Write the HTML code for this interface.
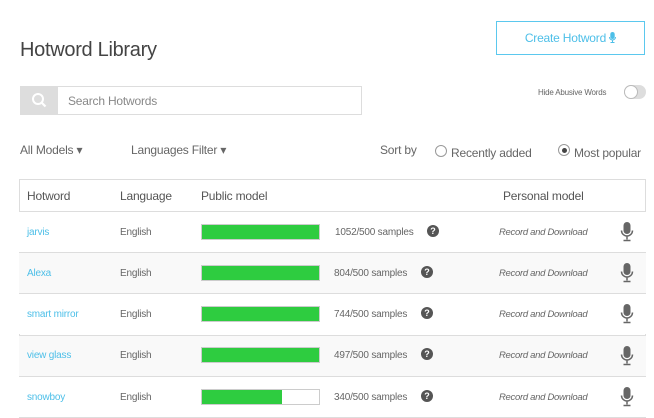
<!DOCTYPE html>
<html><head><style>
*{margin:0;padding:0;box-sizing:border-box}
body{width:654px;height:418px;overflow:hidden;background:#fff;font-family:"Liberation Sans",sans-serif;color:#555;position:relative}
.a{position:absolute;white-space:nowrap}
.row{position:absolute;left:19px;width:627px;height:41px;border-top:1px solid #ddd}
.bar{position:absolute;left:201px;width:119px;height:16px;border:1px solid #ccc;background:#fff}
.bar i{display:block;height:100%;background:#2ecc40}
.q{position:absolute;width:12px;height:12px;border-radius:50%;background:#555;color:#fff;font-size:9px;font-weight:bold;text-align:center;line-height:12px}
.t{font-size:10px;letter-spacing:-0.2px}
</style></head><body>
<div class="a" style="left:20px;top:39px;font-size:20px;color:#444;letter-spacing:-0.3px">Hotword Library</div>
<div class="a" style="left:496px;top:21px;width:149px;height:34px;border:1px solid #5bc8ee;color:#4dbfe8;font-size:12px;text-align:center;line-height:32px;letter-spacing:-0.2px">Create Hotword <svg width="7" height="11" viewBox="0 0 7 11" style="vertical-align:-1px"><rect x="1.3" y="0" width="4.4" height="7" rx="2.2" fill="#4dbfe8"/><path d="M0.5 5a3 3 0 0 0 6 0M3.5 8v2M1.5 10.5h4" stroke="#4dbfe8" fill="none"/></svg></div>
<div class="a" style="left:20px;top:86px;width:342px;height:29px;border:1px solid #ddd"></div>
<div class="a" style="left:20px;top:86px;width:38px;height:29px;background:#ddd"><svg width="38" height="29"><circle cx="18" cy="13" r="5" stroke="#fff" stroke-width="2" fill="none"/><path d="M21.5 16.5l4 4" stroke="#fff" stroke-width="2.2"/></svg></div>
<div class="a" style="left:68px;top:94px;font-size:12px;color:#888;letter-spacing:-0.2px">Search Hotwords</div>
<div class="a" style="left:538px;top:88px;font-size:8px;color:#666;letter-spacing:-0.2px">Hide Abusive Words</div>
<div class="a" style="left:624px;top:85px;width:22px;height:14px;border-radius:7px;background:#ddd"><div style="position:absolute;left:0;top:0;width:14px;height:14px;border-radius:50%;background:#fff;border:1px solid #bbb"></div></div>
<div class="a" style="left:20px;top:143px;font-size:12px;color:#666;letter-spacing:-0.2px">All Models ▾</div>
<div class="a" style="left:131px;top:143px;font-size:12px;color:#666;letter-spacing:-0.2px">Languages Filter ▾</div>
<div class="a" style="left:380px;top:143px;font-size:12px;color:#666;letter-spacing:-0.2px">Sort by</div>
<div class="a" style="left:435px;top:145px;width:12px;height:12px;border:1px solid #999;border-radius:50%"></div>
<div class="a" style="left:451px;top:146px;font-size:12px;color:#666;letter-spacing:-0.2px">Recently added</div>
<div class="a" style="left:558px;top:144px;width:12px;height:12px;border:1px solid #999;border-radius:50%"><div style="margin:2.5px;width:5px;height:5px;border-radius:50%;background:#444"></div></div>
<div class="a" style="left:574px;top:146px;font-size:12px;color:#666;letter-spacing:-0.2px">Most popular</div>
<div class="a" style="left:19px;top:179px;width:627px;height:239px;border:1px solid #ddd"></div>
<div class="a" style="left:27px;top:189px;font-size:12px;color:#555;letter-spacing:-0.2px">Hotword</div>
<div class="a" style="left:120px;top:189px;font-size:12px;color:#555;letter-spacing:-0.2px">Language</div>
<div class="a" style="left:201px;top:189px;font-size:12px;color:#555;letter-spacing:-0.2px">Public model</div>
<div class="a" style="left:503px;top:189px;font-size:12px;color:#555;letter-spacing:-0.2px">Personal model</div>

<div class="row" style="top:211px;background:#fff"></div>
<div class="row" style="top:252px;background:#f9f9f9"></div>
<div class="row" style="top:293px;background:#fff"></div>
<div class="row" style="top:335px;background:#f9f9f9"></div>
<div class="row" style="top:376px;background:#fff"></div>

<div class="a t" style="left:27px;top:227px;color:#4dbfe8">jarvis</div>
<div class="a t" style="left:120px;top:227px;color:#666">English</div>
<div class="bar" style="top:224px"><i style="width:100%"></i></div>
<div class="a t" style="left:335px;top:227px;color:#666">1052/500 samples</div>
<div class="q" style="left:427px;top:225px">?</div>
<div class="a" style="left:499px;top:227px;font-size:9.5px;color:#666;font-style:italic;letter-spacing:-0.3px">Record and Download</div>

<div class="a t" style="left:27px;top:268px;color:#4dbfe8">Alexa</div>
<div class="a t" style="left:120px;top:268px;color:#666">English</div>
<div class="bar" style="top:265px"><i style="width:100%"></i></div>
<div class="a t" style="left:334px;top:268px;color:#666">804/500 samples</div>
<div class="q" style="left:421px;top:266px">?</div>
<div class="a" style="left:499px;top:268px;font-size:9.5px;color:#666;font-style:italic;letter-spacing:-0.3px">Record and Download</div>

<div class="a t" style="left:27px;top:309px;color:#4dbfe8">smart mirror</div>
<div class="a t" style="left:120px;top:309px;color:#666">English</div>
<div class="bar" style="top:306px"><i style="width:100%"></i></div>
<div class="a t" style="left:334px;top:309px;color:#666">744/500 samples</div>
<div class="q" style="left:421px;top:307px">?</div>
<div class="a" style="left:499px;top:309px;font-size:9.5px;color:#666;font-style:italic;letter-spacing:-0.3px">Record and Download</div>

<div class="a t" style="left:27px;top:350px;color:#4dbfe8">view glass</div>
<div class="a t" style="left:120px;top:350px;color:#666">English</div>
<div class="bar" style="top:347px"><i style="width:100%"></i></div>
<div class="a t" style="left:334px;top:350px;color:#666">497/500 samples</div>
<div class="q" style="left:421px;top:348px">?</div>
<div class="a" style="left:499px;top:350px;font-size:9.5px;color:#666;font-style:italic;letter-spacing:-0.3px">Record and Download</div>

<div class="a t" style="left:27px;top:392px;color:#4dbfe8">snowboy</div>
<div class="a t" style="left:120px;top:392px;color:#666">English</div>
<div class="bar" style="top:389px"><i style="width:68%"></i></div>
<div class="a t" style="left:334px;top:392px;color:#666">340/500 samples</div>
<div class="q" style="left:421px;top:390px">?</div>
<div class="a" style="left:499px;top:392px;font-size:9.5px;color:#666;font-style:italic;letter-spacing:-0.3px">Record and Download</div>

<svg class="a" style="left:620px;top:222px" width="14" height="20" viewBox="0 0 14 20"><rect x="3.5" y="0" width="7" height="12" rx="3.5" fill="#666"/><path d="M1.5 8.5a5.5 5.5 0 0 0 11 0M7 14v3.5M3.5 18.5h7" stroke="#666" stroke-width="1.5" fill="none"/></svg>
<svg class="a" style="left:620px;top:263px" width="14" height="20" viewBox="0 0 14 20"><rect x="3.5" y="0" width="7" height="12" rx="3.5" fill="#666"/><path d="M1.5 8.5a5.5 5.5 0 0 0 11 0M7 14v3.5M3.5 18.5h7" stroke="#666" stroke-width="1.5" fill="none"/></svg>
<svg class="a" style="left:620px;top:304px" width="14" height="20" viewBox="0 0 14 20"><rect x="3.5" y="0" width="7" height="12" rx="3.5" fill="#666"/><path d="M1.5 8.5a5.5 5.5 0 0 0 11 0M7 14v3.5M3.5 18.5h7" stroke="#666" stroke-width="1.5" fill="none"/></svg>
<svg class="a" style="left:620px;top:346px" width="14" height="20" viewBox="0 0 14 20"><rect x="3.5" y="0" width="7" height="12" rx="3.5" fill="#666"/><path d="M1.5 8.5a5.5 5.5 0 0 0 11 0M7 14v3.5M3.5 18.5h7" stroke="#666" stroke-width="1.5" fill="none"/></svg>
<svg class="a" style="left:620px;top:387px" width="14" height="20" viewBox="0 0 14 20"><rect x="3.5" y="0" width="7" height="12" rx="3.5" fill="#666"/><path d="M1.5 8.5a5.5 5.5 0 0 0 11 0M7 14v3.5M3.5 18.5h7" stroke="#666" stroke-width="1.5" fill="none"/></svg>
</body></html>
